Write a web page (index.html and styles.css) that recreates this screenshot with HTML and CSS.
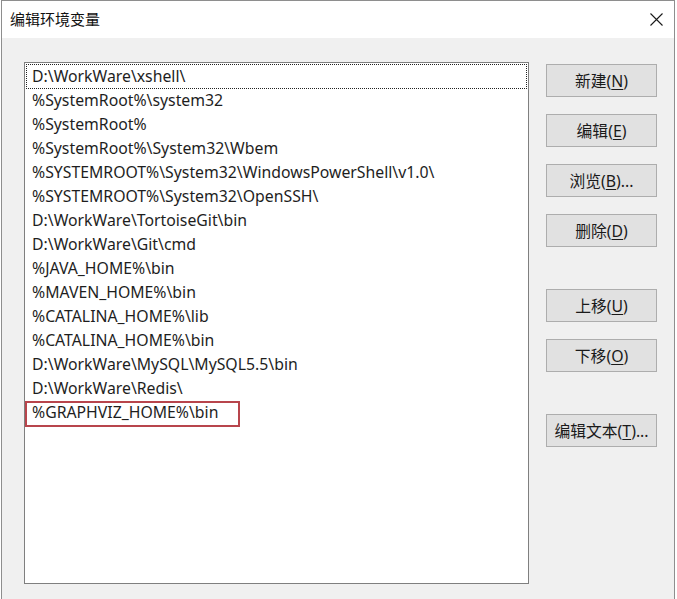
FILE: index.html
```html
<!DOCTYPE html>
<html lang="zh-CN">
<head>
<meta charset="utf-8">
<title>编辑环境变量</title>
<link rel="stylesheet" href="styles.css">
</head>
<body>
<div class="window">
  <div class="titlebar">
    <span class="title">编辑环境变量</span>
    <span class="close">
      <svg width="13" height="13" viewBox="0 0 13 13"><path d="M0.5 0.5 L12.5 12.5 M12.5 0.5 L0.5 12.5" stroke="#1a1a1a" stroke-width="1.1" fill="none"/></svg>
    </span>
  </div>
  <div class="content">
    <div class="listbox">
      <div class="row focused">D:\WorkWare\xshell\</div>
      <div class="row">%SystemRoot%\system32</div>
      <div class="row">%SystemRoot%</div>
      <div class="row">%SystemRoot%\System32\Wbem</div>
      <div class="row">%SYSTEMROOT%\System32\WindowsPowerShell\v1.0\</div>
      <div class="row">%SYSTEMROOT%\System32\OpenSSH\</div>
      <div class="row">D:\WorkWare\TortoiseGit\bin</div>
      <div class="row">D:\WorkWare\Git\cmd</div>
      <div class="row">%JAVA_HOME%\bin</div>
      <div class="row">%MAVEN_HOME%\bin</div>
      <div class="row">%CATALINA_HOME%\lib</div>
      <div class="row">%CATALINA_HOME%\bin</div>
      <div class="row">D:\WorkWare\MySQL\MySQL5.5\bin</div>
      <div class="row">D:\WorkWare\Redis\</div>
      <div class="row marked">%GRAPHVIZ_HOME%\bin</div>
    </div>
    <div class="buttons">
      <button class="btn">新建(<u>N</u>)</button>
      <button class="btn">编辑(<u>E</u>)</button>
      <button class="btn">浏览(<u>B</u>)...</button>
      <button class="btn">删除(<u>D</u>)</button>
      <button class="btn group">上移(<u>U</u>)</button>
      <button class="btn">下移(<u>O</u>)</button>
      <button class="btn group">编辑文本(<u>T</u>)...</button>
    </div>
  </div>
</div>
</body>
</html>
```
FILE: styles.css
```css
html, body {
  margin: 0;
  padding: 0;
  background: #ffffff;
  overflow: hidden;
}

body {
  font-family: "Noto Sans", "Noto Sans CJK SC", sans-serif;
  font-size: 15px;
  color: #1a1a1a;
}

.window {
  margin-left: 1px;
  width: 672px;
  height: 598px;
  border: 1px solid #8e8e8e;
  border-bottom: none;
  background: #f0f0f0;
}

.titlebar {
  height: 37px;
  background: #ffffff;
  display: flex;
  align-items: center;
  justify-content: space-between;
  padding: 0 11px 0 8px;
}

.title {
  font-size: 15px;
  color: #111;
  padding-bottom: 2px;
}

.close {
  display: flex;
  padding-bottom: 1px;
}

.content {
  display: flex;
  align-items: flex-start;
  padding: 24px 0 0 22px;
  gap: 17px;
}

.listbox {
  width: 501px;
  height: 518px;
  border: 1px solid #7f7f7f;
  background: #ffffff;
  padding: 1px;
}

.row {
  height: 24px;
  line-height: 24px;
  padding-left: 6px;
  font-size: 15.8px;
  white-space: nowrap;
  color: #1e1e1e;
  box-sizing: border-box;
  position: relative;
}

.row.focused {
  height: 25px;
  line-height: 23px;
  padding-left: 5px;
  border: 1px dotted #222;
  margin-bottom: -1px;
}

.row.marked::after {
  content: "";
  position: absolute;
  left: -1px;
  top: 1px;
  width: 211px;
  height: 22px;
  border: 2px solid #b8454c;
}

.buttons {
  display: flex;
  flex-direction: column;
  gap: 17px;
  padding-top: 2px;
}

.btn {
  width: 111px;
  height: 33px;
  border: 1px solid #adadad;
  background: #e1e1e1;
  font-family: "Noto Sans", "Noto Sans CJK SC", sans-serif;
  font-size: 15.8px;
  color: #1a1a1a;
  padding: 0;
  margin: 0;
  white-space: nowrap;
}

.btn.group {
  margin-top: 25px;
}

.btn u {
  text-underline-offset: 2px;
}
```
